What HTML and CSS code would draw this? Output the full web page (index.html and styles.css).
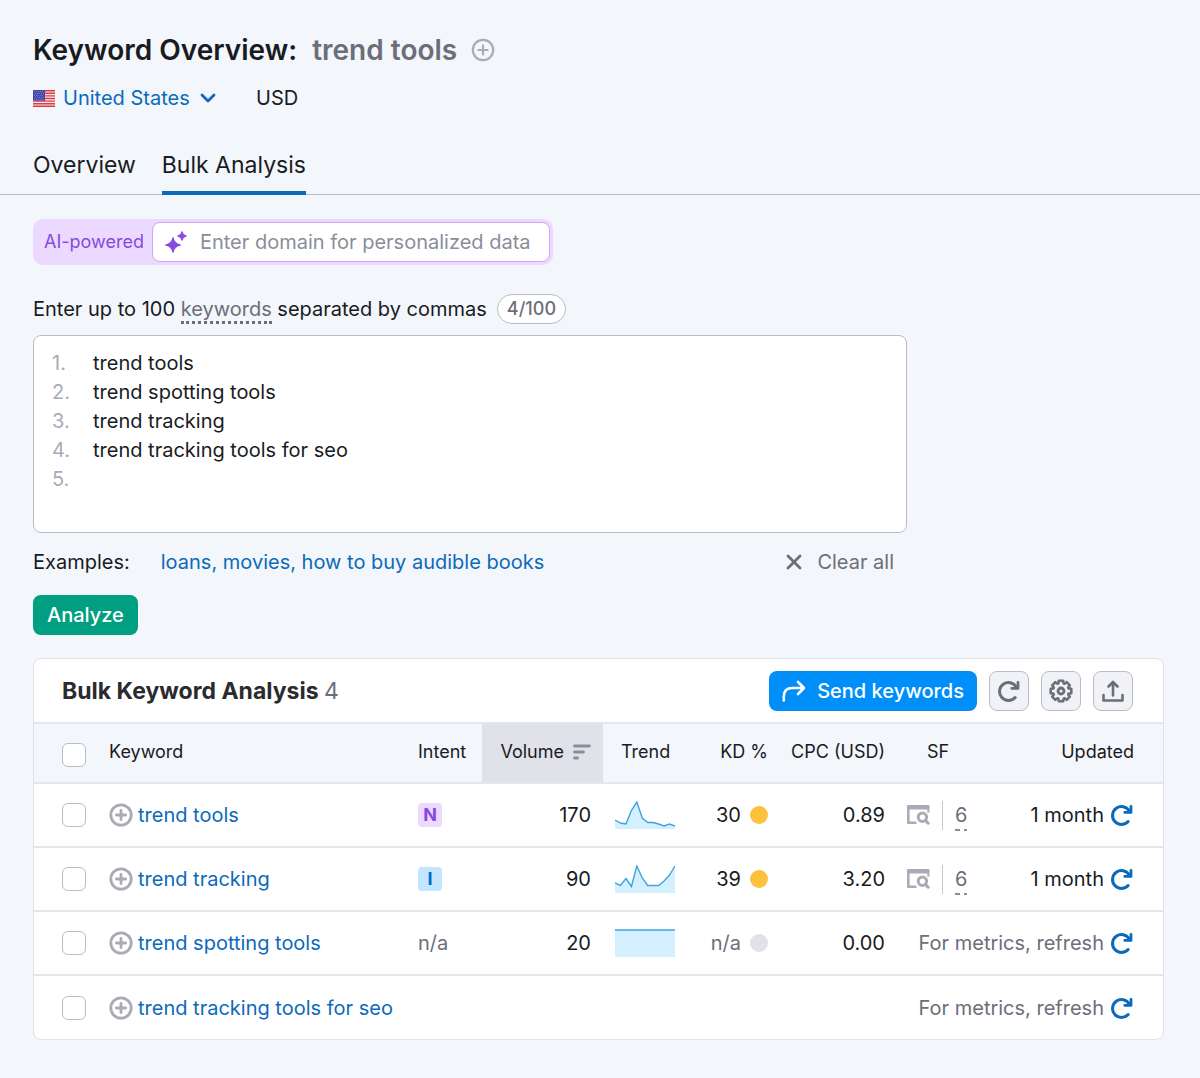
FILE: index.html
```html
<!DOCTYPE html>
<html lang="en">
<head>
    <meta charset="UTF-8">
    <meta name="viewport" content="width=device-width, initial-scale=1.0">
    <title>Keyword Overview: trend tools</title>
    <link rel="stylesheet" href="styles.css">
</head>
<body>

    <!-- Shared icons -->
    <svg class="sprite" aria-hidden="true">
        <symbol id="icon-plus" viewBox="0 0 24 24">
            <circle cx="12" cy="12" r="10.2" fill="none" stroke="currentColor"/>
            <path d="M12 7.4v9.2M7.4 12h9.2" fill="none" stroke="currentColor" stroke-linecap="round"/>
        </symbol>
        <symbol id="icon-refresh" viewBox="0 0 24 24">
            <path d="M19.3 8A9 9 0 1 0 18.2 18.6" fill="none" stroke="currentColor" stroke-width="3" stroke-linecap="round"/>
            <path d="M21 3.4v6h-6.2" fill="none" stroke="currentColor" stroke-width="2.8" stroke-linecap="round" stroke-linejoin="round"/>
        </symbol>
        <symbol id="icon-serp" viewBox="0 0 23 20">
            <path d="M1 0h20.5a1 1 0 0 1 1 1v6.6h-2.2V4.4H2.6v12.2H8.4a1.2 1.2 0 0 1 1.2 1.2V19H1a1 1 0 0 1-1-1V1a1 1 0 0 1 1-1z" fill="currentColor"/>
            <circle cx="15.4" cy="12.2" r="4.2" fill="none" stroke="currentColor" stroke-width="3"/>
            <path d="M18.4 15.4l2.8 2.8" fill="none" stroke="currentColor" stroke-width="3" stroke-linecap="round"/>
        </symbol>
    </svg>

    <!-- Header -->
    <header class="header">
        <div class="title-row">
            <h1>Keyword Overview: <span class="query">trend tools</span></h1>
            <button class="icon-btn" type="button" aria-label="Add keyword"><svg class="icon plus-thin"><use href="#icon-plus"/></svg></button>
        </div>
        <div class="meta">
            <label class="country">
                <svg class="flag" viewBox="0 0 22 17" aria-hidden="true">
                    <rect width="22" height="17" fill="#f5e9ec"/>
                    <path d="M0 .7h22M0 3.3h22M0 5.9h22M0 8.5h22M0 11.1h22M0 13.7h22M0 16.3h22" stroke="#dc3b40" stroke-width="1.4"/>
                    <rect width="12" height="10.6" fill="#4146a8"/>
                    <path d="M1 1.6h10M2 3.5h10M1 5.4h10M2 7.3h10M1 9.2h10" stroke="#a5a8de" stroke-width=".8" stroke-dasharray=".8 1.2"/>
                </svg>
                <select aria-label="Country">
                    <option>United States</option>
                </select>
                <svg class="chevron" viewBox="0 0 16 10" aria-hidden="true"><path d="M2 2l6 6 6-6" fill="none" stroke="currentColor" stroke-width="2.8" stroke-linecap="round" stroke-linejoin="round"/></svg>
            </label>
            <span>USD</span>
        </div>
        <nav class="tabs">
            <a href="#overview">Overview</a>
            <a href="#bulk" class="active">Bulk Analysis</a>
        </nav>
    </header>

    <main>
        <!-- Keyword form -->
        <form class="form">
            <div class="ai-box">
                <label for="domain">AI-powered</label>
                <div class="ai-field">
                    <svg class="sparkle" viewBox="0 0 22 22" aria-hidden="true">
                        <path d="M8 6.5Q9.4 12.6 15.5 14 9.4 15.4 8 21.5 6.6 15.4.5 14 6.6 12.6 8 6.5z" fill="currentColor" stroke="currentColor" stroke-linejoin="round"/>
                        <path d="M17 .6Q17.8 4.2 21.4 5 17.8 5.8 17 9.4 16.2 5.8 12.6 5 16.2 4.2 17 .6z" fill="currentColor" stroke="currentColor" stroke-linejoin="round"/>
                    </svg>
                    <input id="domain" type="text" placeholder="Enter domain for personalized data">
                </div>
            </div>

            <div class="hint">
                <label for="keywords">Enter up to 100 <span class="dotted">keywords</span> separated by commas</label>
                <span class="counter">4/100</span>
            </div>

            <div class="editor">
                <div class="lines" aria-hidden="true">
                    <span>1.</span>
                    <span>2.</span>
                    <span>3.</span>
                    <span>4.</span>
                    <span>5.</span>
                </div>
                <textarea id="keywords" rows="6">trend tools
trend spotting tools
trend tracking
trend tracking tools for seo</textarea>
            </div>

            <div class="examples">
                <span>Examples:</span>
                <a href="#examples">loans, movies, how to buy audible books</a>
                <button class="clear" type="button">
                    <svg class="cross" viewBox="0 0 16 16" aria-hidden="true"><path d="M2 2l12 12M14 2L2 14" fill="none" stroke="currentColor" stroke-width="2.8" stroke-linecap="round"/></svg>
                    Clear all
                </button>
            </div>

            <button class="analyze" type="button">Analyze</button>
        </form>

        <!-- Results -->
        <section class="card">
            <div class="card-head">
                <h2>Bulk Keyword Analysis <span>4</span></h2>
                <div class="actions">
                    <button class="send" type="button">
                        <svg class="icon" viewBox="0 0 24 24" aria-hidden="true"><path d="M1.8 21.5v-4q0-8.5 8.5-8.5H21.5M16 3l6 6-6 6" fill="none" stroke="currentColor" stroke-width="2.6" stroke-linecap="round" stroke-linejoin="round"/></svg>
                        Send keywords
                    </button>
                    <button class="tool" type="button" aria-label="Refresh"><svg class="icon"><use href="#icon-refresh"/></svg></button>
                    <button class="tool" type="button" aria-label="Settings">
                        <svg class="icon" viewBox="0 0 24 24">
                            <path d="M9.8 1.7L14.2 1.7 14.6 4.4 15.5 4.8 17.7 3.2 20.8 6.3 19.2 8.5 19.6 9.4 22.3 9.8 22.3 14.2 19.6 14.6 19.2 15.5 20.8 17.7 17.7 20.8 15.5 19.2 14.6 19.6 14.2 22.3 9.8 22.3 9.4 19.6 8.5 19.2 6.3 20.8 3.2 17.7 4.8 15.5 4.4 14.6 1.7 14.2 1.7 9.8 4.4 9.4 4.8 8.5 3.2 6.3 6.3 3.2 8.5 4.8 9.4 4.4z" fill="none" stroke="currentColor" stroke-width="2.6" stroke-linejoin="round"/>
                            <circle cx="12" cy="12" r="3" fill="none" stroke="currentColor" stroke-width="2.8"/>
                        </svg>
                    </button>
                    <button class="tool" type="button" aria-label="Export">
                        <svg class="icon" viewBox="0 0 24 24"><path d="M2.5 16v5.5h19V16M12 16.5V3.5M7.5 7.5L12 3l4.5 4.5" fill="none" stroke="currentColor" stroke-width="2.6" stroke-linecap="round" stroke-linejoin="round"/></svg>
                    </button>
                </div>
            </div>

            <table>
                <colgroup>
                    <col class="c-check">
                    <col>
                    <col class="c-intent">
                    <col class="c-volume">
                    <col class="c-trend">
                    <col class="c-kd">
                    <col class="c-cpc">
                    <col class="c-sf">
                    <col class="c-updated">
                </colgroup>
                <thead>
                    <tr>
                        <th class="check"><input type="checkbox" aria-label="Select all"></th>
                        <th>Keyword</th>
                        <th>Intent</th>
                        <th class="num sorted">
                            <span class="sort">Volume
                                <svg class="sort-icon" viewBox="0 0 18 16" aria-hidden="true"><path d="M1.5 2h15M1.5 8h9M1.5 14h3" stroke="currentColor" stroke-width="2.8" stroke-linecap="round"/></svg>
                            </span>
                        </th>
                        <th class="trend-head">Trend</th>
                        <th class="kd">KD %</th>
                        <th class="num">CPC (USD)</th>
                        <th class="sf-head">SF</th>
                        <th class="updated">Updated</th>
                    </tr>
                </thead>
                <tbody>
                    <tr>
                        <td class="check"><input type="checkbox" aria-label="Select trend tools"></td>
                        <td><div class="keyword"><svg class="icon add"><use href="#icon-plus"/></svg><a href="#k1">trend tools</a></div></td>
                        <td><span class="badge badge-n">N</span></td>
                        <td class="num">170</td>
                        <td><svg class="chart" viewBox="0 0 60 28" aria-hidden="true">
                            <path d="M0 19l5.5 3 5.5 1L16.4 9.5 21.8 1l5.5 16 5.4 4.5h5.5l5.4 1.5 5.5 2 5.4-2 5.5 2v3H0z" fill="#d4efff"/>
                            <path d="M0 19l5.5 3 5.5 1L16.4 9.5 21.8 1l5.5 16 5.4 4.5h5.5l5.4 1.5 5.5 2 5.4-2 5.5 2" fill="none" stroke="#3ea5dc" stroke-width="1.4"/>
                        </svg></td>
                        <td class="kd"><span class="score">30 <i class="dot dot-yellow"></i></span></td>
                        <td class="num">0.89</td>
                        <td class="sf"><div class="serp"><svg class="serp-icon"><use href="#icon-serp"/></svg><span class="divider"></span><a href="#sf1">6</a></div></td>
                        <td class="updated"><div class="refresh">1 month <button class="icon-btn blue" type="button" aria-label="Refresh trend tools"><svg class="icon"><use href="#icon-refresh"/></svg></button></div></td>
                    </tr>
                    <tr>
                        <td class="check"><input type="checkbox" aria-label="Select trend tracking"></td>
                        <td><div class="keyword"><svg class="icon add"><use href="#icon-plus"/></svg><a href="#k2">trend tracking</a></div></td>
                        <td><span class="badge badge-i">I</span></td>
                        <td class="num">90</td>
                        <td><svg class="chart" viewBox="0 0 60 28" aria-hidden="true">
                            <path d="M0 18l5.5 2.5 5.5-7 5.4 8L21.8 1l5.5 12 5.4 7.5h10.9l5.5-4.5 5.4-6L60 1v27H0z" fill="#d4efff"/>
                            <path d="M0 18l5.5 2.5 5.5-7 5.4 8L21.8 1l5.5 12 5.4 7.5h10.9l5.5-4.5 5.4-6L60 1" fill="none" stroke="#3ea5dc" stroke-width="1.4"/>
                        </svg></td>
                        <td class="kd"><span class="score">39 <i class="dot dot-yellow"></i></span></td>
                        <td class="num">3.20</td>
                        <td class="sf"><div class="serp"><svg class="serp-icon"><use href="#icon-serp"/></svg><span class="divider"></span><a href="#sf2">6</a></div></td>
                        <td class="updated"><div class="refresh">1 month <button class="icon-btn blue" type="button" aria-label="Refresh trend tracking"><svg class="icon"><use href="#icon-refresh"/></svg></button></div></td>
                    </tr>
                    <tr>
                        <td class="check"><input type="checkbox" aria-label="Select trend spotting tools"></td>
                        <td><div class="keyword"><svg class="icon add"><use href="#icon-plus"/></svg><a href="#k3">trend spotting tools</a></div></td>
                        <td class="muted">n/a</td>
                        <td class="num">20</td>
                        <td><svg class="chart" viewBox="0 0 60 28" aria-hidden="true">
                            <path d="M0 1h60v27H0z" fill="#d4efff"/>
                            <path d="M0 1h60" stroke="#3ea5dc" stroke-width="1.6"/>
                        </svg></td>
                        <td class="kd muted"><span class="score">n/a <i class="dot"></i></span></td>
                        <td class="num">0.00</td>
                        <td class="updated muted" colspan="2"><div class="refresh">For metrics, refresh <button class="icon-btn blue" type="button" aria-label="Refresh trend spotting tools"><svg class="icon"><use href="#icon-refresh"/></svg></button></div></td>
                    </tr>
                    <tr>
                        <td class="check"><input type="checkbox" aria-label="Select trend tracking tools for seo"></td>
                        <td><div class="keyword"><svg class="icon add"><use href="#icon-plus"/></svg><a href="#k4">trend tracking tools for seo</a></div></td>
                        <td></td>
                        <td></td>
                        <td></td>
                        <td></td>
                        <td></td>
                        <td class="updated muted" colspan="2"><div class="refresh">For metrics, refresh <button class="icon-btn blue" type="button" aria-label="Refresh trend tracking tools for seo"><svg class="icon"><use href="#icon-refresh"/></svg></button></div></td>
                    </tr>
                </tbody>
            </table>
        </section>
    </main>

</body>
</html>
```
FILE: styles.css
```css
* {
    margin: 0;
    padding: 0;
    box-sizing: border-box;
}

body {
    background-color: #f3f6fa;
    color: #191b23;
    font-family: Inter, "Liberation Sans", sans-serif;
    font-size: 20px;
    line-height: 28px;
}

a {
    color: #0c6abb;
    text-decoration: none;
}

button, input, select, textarea {
    font: inherit;
    color: inherit;
    border: none;
    background: none;
}

button {
    cursor: pointer;
}

svg {
    display: block;
    flex-shrink: 0;
}

.sprite {
    position: absolute;
    width: 0;
    height: 0;
}

.icon {
    width: 24px;
    height: 24px;
}

.muted {
    color: #6c6e79;
}

/* Header */
.header {
    padding: 32px 33px 0;
    border-bottom: 1px solid #b9bcc6;
}

.title-row {
    display: flex;
    align-items: center;
    gap: 14px;
}

h1 {
    font-size: 28px;
    line-height: 36px;
    font-weight: 600;
}

.query {
    color: #6c6e79;
    margin-left: 8px;
}

.icon-btn {
    display: flex;
    color: #a9abb6;
}

.plus-thin {
    stroke-width: 2.2;
}

.meta {
    display: flex;
    align-items: center;
    gap: 40px;
    margin-top: 16px;
}

.country {
    display: flex;
    align-items: center;
    color: #0c6abb;
}

.flag {
    width: 22px;
    height: 17px;
    margin-right: 8px;
}

.country select {
    appearance: none;
    cursor: pointer;
}

.chevron {
    width: 16px;
    height: 10px;
    margin-left: 10px;
}

.tabs {
    display: flex;
    gap: 26px;
    margin-top: 39px;
    margin-bottom: -1px;
}

.tabs a {
    color: #191b23;
    font-size: 23px;
    padding-bottom: 12px;
    border-bottom: 4px solid transparent;
}

.tabs .active {
    border-color: #0c6abb;
}

/* Form */
main {
    padding: 24px 36px 36px 33px;
}

.form {
    max-width: 874px;
}

.ai-box {
    display: flex;
    align-items: center;
    width: fit-content;
    padding: 3px;
    border-radius: 10px;
    background-color: #ecd9ff;
}

.ai-box label {
    padding: 0 8px;
    color: #8649e1;
    font-size: 18px;
}

.ai-field {
    display: flex;
    align-items: center;
    gap: 13px;
    width: 398px;
    padding: 5px 12px;
    border: 1px solid #cfa6ef;
    border-radius: 8px;
    background-color: #fff;
}

.sparkle {
    width: 22px;
    height: 22px;
    color: #8649e1;
}

.ai-field input {
    flex: 1;
    min-width: 0;
    height: 28px;
}

::placeholder {
    color: #8a8e9b;
    opacity: 1;
}

.hint {
    display: flex;
    align-items: center;
    gap: 10px;
    margin-top: 29px;
}

.dotted {
    color: #6c6e79;
    border-bottom: 3px dotted #6c6e79;
}

.counter {
    padding: 0 9px;
    border: 1px solid #b9bcc6;
    border-radius: 15px;
    background-color: #fff;
    color: #6c6e79;
    font-size: 18px;
    font-weight: 500;
    line-height: 28px;
}

.editor {
    display: flex;
    margin-top: 11px;
    padding: 13px 18px 9px;
    border: 1px solid #b9bcc6;
    border-radius: 8px;
    background-color: #fff;
    line-height: 29px;
}

.lines {
    display: flex;
    flex-direction: column;
    width: 41px;
    color: #a9abb6;
}

.editor textarea {
    flex: 1;
    resize: none;
    outline: none;
    overflow: hidden;
}

.examples {
    display: flex;
    align-items: center;
    gap: 31px;
    margin-top: 15px;
    padding-right: 13px;
}

.clear {
    display: flex;
    align-items: center;
    gap: 15px;
    margin-left: auto;
    color: #6c6e79;
}

.cross {
    width: 16px;
    height: 16px;
}

.analyze {
    margin-top: 19px;
    padding: 6px 14px;
    border-radius: 8px;
    background-color: #009f81;
    color: #fff;
    font-weight: 500;
}

/* Results card */
.card {
    margin-top: 23px;
    border: 1px solid #e0e1e9;
    border-radius: 8px;
    background-color: #fff;
    overflow: hidden;
}

.card-head {
    display: flex;
    align-items: center;
    justify-content: space-between;
    padding: 12px 30px 11px 28px;
}

h2 {
    color: #2b2b2f;
    font-size: 23px;
    font-weight: 700;
}

h2 span {
    color: #6c6e79;
    font-weight: 400;
}

.actions {
    display: flex;
    gap: 12px;
}

.send {
    display: flex;
    align-items: center;
    gap: 11px;
    padding: 0 13px;
    border-radius: 8px;
    background-color: #008ff8;
    color: #fff;
    font-weight: 500;
}

.tool {
    display: flex;
    padding: 7px;
    border: 1px solid #b9bcc6;
    border-radius: 8px;
    background-color: #f1f2f5;
    color: #6c6e79;
}

/* Table */
table {
    width: 100%;
    table-layout: fixed;
    border-collapse: collapse;
}

.c-check { width: 63px; }
.c-intent { width: 76px; }
.c-volume { width: 121px; }
.c-trend { width: 83px; }
.c-kd { width: 92px; }
.c-cpc { width: 119px; }
.c-sf { width: 84px; }
.c-updated { width: 182px; }

th, td {
    padding: 0 12px;
    border-top: 2px solid #e4e6ec;
    text-align: left;
    white-space: nowrap;
}

th {
    height: 60px;
    padding-top: 14px;
    background-color: #f3f6fa;
    font-size: 18px;
    font-weight: 400;
    vertical-align: top;
}

td {
    height: 64px;
}

.check {
    padding-left: 28px;
}

.check input {
    display: block;
    appearance: none;
    width: 24px;
    height: 24px;
    border: 1px solid #b9bcc6;
    border-radius: 6px;
    background-color: #fff;
}

th.check {
    padding-top: 19px;
}

.num, .kd, .updated {
    text-align: right;
}

.sorted {
    background-color: #e0e1e9;
}

.sort {
    display: flex;
    align-items: center;
    justify-content: flex-end;
    gap: 9px;
}

.sort-icon {
    width: 18px;
    height: 16px;
    color: #8a8e9b;
}

.trend-head {
    padding-left: 18px;
}

.kd {
    padding-right: 10px;
}

.sf-head {
    padding-left: 30px;
}

.updated {
    padding-right: 29px;
}

.keyword, .serp, .refresh, .score {
    display: flex;
    align-items: center;
}

.keyword {
    gap: 5px;
}

.add {
    color: #a9abb6;
    stroke-width: 2.8;
}

.badge {
    display: block;
    width: 24px;
    border-radius: 4px;
    font-size: 18px;
    font-weight: 700;
    line-height: 24px;
    text-align: center;
}

.badge-n {
    background-color: #ecd9ff;
    color: #8649e1;
}

.badge-i {
    background-color: #c4e5fe;
    color: #006dca;
}

.chart {
    width: 60px;
    height: 28px;
}

.score {
    justify-content: flex-end;
    gap: 9px;
}

.dot {
    width: 18px;
    height: 18px;
    border-radius: 50%;
    background-color: #e0e1e9;
}

.dot-yellow {
    background-color: #fdc23c;
}

.sf {
    padding: 0 10px;
}

.serp {
    gap: 12px;
}

.serp-icon {
    width: 23px;
    height: 20px;
    color: #a9abb6;
}

.divider {
    width: 1px;
    height: 29px;
    background-color: #c4c7cf;
}

.serp a {
    padding: 2px 0;
    color: #6c6e79;
    background: repeating-linear-gradient(90deg, #8a8e9b 0 5px, transparent 5px 9px) bottom / 100% 2px no-repeat;
}

.refresh {
    justify-content: flex-end;
    gap: 6px;
}

.blue {
    color: #0c6abb;
}
```
